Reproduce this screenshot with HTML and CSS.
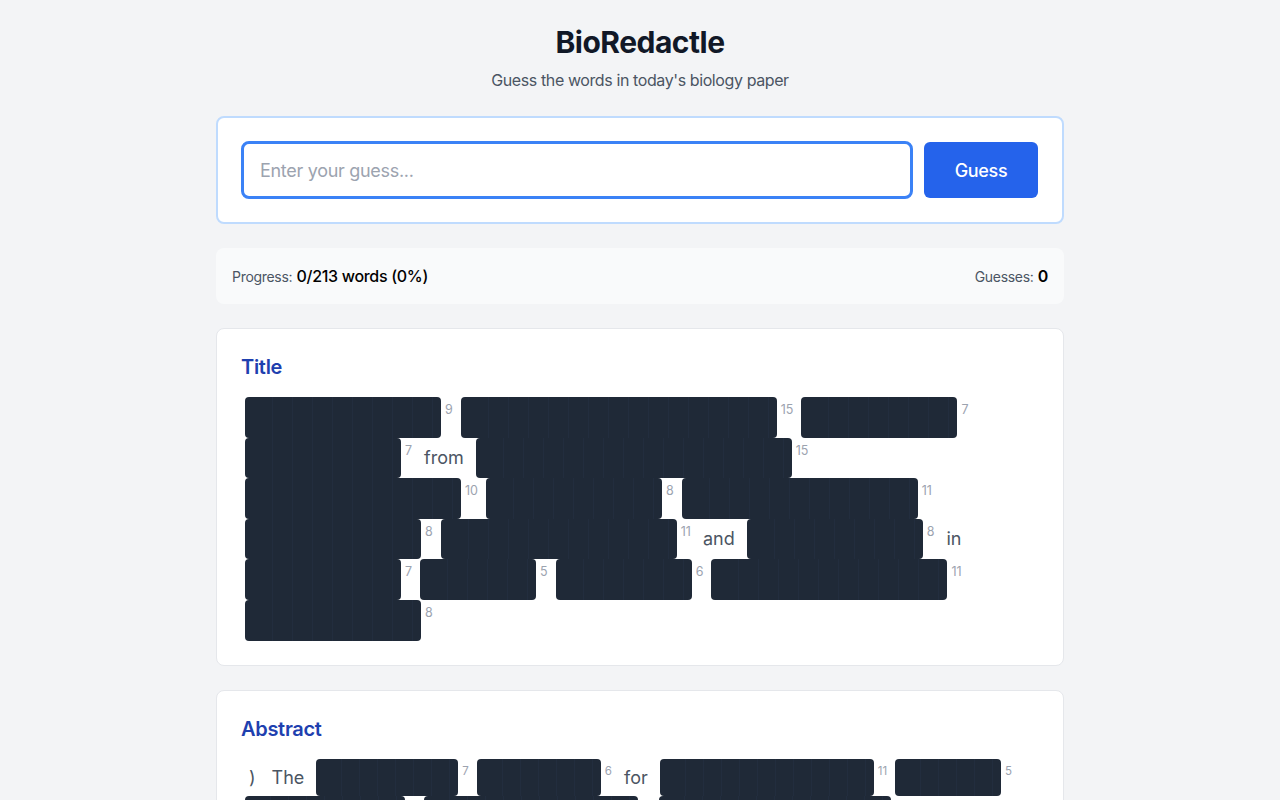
FILE: index.html
```html
<!DOCTYPE html>
<html lang="en">
<head>
<meta charset="utf-8">
<title>BioRedactle</title>
<link rel="stylesheet" href="styles.css">
</head>
<body>
<main class="page">
  <header class="head">
    <h1 class="brand">BioRedactle</h1>
    <p class="tagline">Guess the words in today's biology paper</p>
  </header>

  <section class="guess-card">
    <input class="guess-input" type="text" placeholder="Enter your guess...">
    <button class="guess-btn" type="button">Guess</button>
  </section>

  <section class="stats">
    <div class="stat"><span class="stat-label">Progress:</span> <span class="stat-value">0/213 words (0%)</span></div>
    <div class="stat"><span class="stat-label">Guesses:</span> <span class="stat-value strong">0</span></div>
  </section>

  <section class="card">
    <h2 class="card-title">Title</h2>
    <div class="words">
      <span class="tok"><span class="red" style="--n:9"></span><span class="num">9</span></span>
      <span class="tok"><span class="red" style="--n:15"></span><span class="num">15</span></span>
      <span class="tok"><span class="red" style="--n:7"></span><span class="num">7</span></span>
      <span class="tok"><span class="red" style="--n:7"></span><span class="num">7</span></span>
      <span class="plain">from</span>
      <span class="tok"><span class="red" style="--n:15"></span><span class="num">15</span></span>
      <span class="tok"><span class="red" style="--n:10"></span><span class="num">10</span></span>
      <span class="tok"><span class="red" style="--n:8"></span><span class="num">8</span></span>
      <span class="tok"><span class="red" style="--n:11"></span><span class="num">11</span></span>
      <span class="tok"><span class="red" style="--n:8"></span><span class="num">8</span></span>
      <span class="tok"><span class="red" style="--n:11"></span><span class="num">11</span></span>
      <span class="plain">and</span>
      <span class="tok"><span class="red" style="--n:8"></span><span class="num">8</span></span>
      <span class="plain">in</span>
      <span class="tok"><span class="red" style="--n:7"></span><span class="num">7</span></span>
      <span class="tok"><span class="red" style="--n:5"></span><span class="num">5</span></span>
      <span class="tok"><span class="red" style="--n:6"></span><span class="num">6</span></span>
      <span class="tok"><span class="red" style="--n:11"></span><span class="num">11</span></span>
      <span class="tok"><span class="red" style="--n:8"></span><span class="num">8</span></span>
    </div>
  </section>

  <section class="card">
    <h2 class="card-title">Abstract</h2>
    <div class="words small">
      <span class="plain">)</span>
      <span class="plain">The</span>
      <span class="tok"><span class="red" style="--n:7"></span><span class="num">7</span></span>
      <span class="tok"><span class="red" style="--n:6"></span><span class="num">6</span></span>
      <span class="plain">for</span>
      <span class="tok"><span class="red" style="--n:11"></span><span class="num">11</span></span>
      <span class="tok"><span class="red" style="--n:5"></span><span class="num">5</span></span>
      <span class="tok"><span class="red" style="--n:8"></span><span class="num">8</span></span>
      <span class="tok"><span class="red" style="--n:11"></span><span class="num">11</span></span>
      <span class="tok"><span class="red" style="--n:12"></span><span class="num">12</span></span>
      <span class="plain">of</span>
      <span class="tok"><span class="red" style="--n:9"></span><span class="num">9</span></span>
      <span class="tok"><span class="red" style="--n:4"></span><span class="num">4</span></span>
      <span class="plain">the</span>
      <span class="tok"><span class="red" style="--n:10"></span><span class="num">10</span></span>
      <span class="tok"><span class="red" style="--n:7"></span><span class="num">7</span></span>
      <span class="plain">and</span>
      <span class="tok"><span class="red" style="--n:8"></span><span class="num">8</span></span>
      <span class="tok"><span class="red" style="--n:6"></span><span class="num">6</span></span>
    </div>
  </section>
</main>
</body>
</html>
```

FILE: styles.css
```css
* { box-sizing: border-box; }

html, body {
  margin: 0;
  padding: 0;
}

body {
  background: #f3f4f6;
  font-family: Inter, "Noto Sans", "Liberation Sans", sans-serif;
  color: #111827;
}

.page {
  width: 848px;
  margin: 0 auto;
  padding: 24px 0 40px;
}

.head {
  text-align: center;
  margin-bottom: 24px;
}

.brand {
  margin: 0;
  font-size: 30px;
  line-height: 36px;
  font-weight: 700;
  letter-spacing: -0.5px;
  color: #111827;
}

.tagline {
  margin: 8px 0 0;
  font-size: 16px;
  line-height: 24px;
  letter-spacing: -0.4px;
  color: #4b5563;
}

.guess-card {
  display: flex;
  align-items: center;
  gap: 11px;
  background: #ffffff;
  border: 2px solid #bfdbfe;
  border-radius: 8px;
  padding: 23px 24px 23px 23px;
  margin-bottom: 24px;
}

.guess-input {
  flex: 1;
  height: 58px;
  border: 3px solid #3b82f6;
  border-radius: 8px;
  padding: 0 16px;
  font-family: inherit;
  font-size: 18px;
  letter-spacing: -0.3px;
  color: #111827;
  outline: none;
  background: #fff;
}

.guess-input::placeholder {
  color: #9ca3af;
}

.guess-btn {
  width: 114px;
  height: 56px;
  border: 0;
  border-radius: 6px;
  background: #2563eb;
  color: #ffffff;
  font-family: inherit;
  font-size: 18px;
  font-weight: 500;
  letter-spacing: -0.3px;
}

.stats {
  display: flex;
  justify-content: space-between;
  align-items: center;
  background: #f9fafb;
  border-radius: 8px;
  padding: 16px;
  height: 56px;
  margin-bottom: 24px;
  letter-spacing: -0.3px;
}

.stat {
  line-height: 24px;
}

.stat-label {
  font-size: 14px;
  color: #4b5563;
}

.stat-value {
  font-size: 16px;
  font-weight: 500;
  color: #000000;
}

.stat-value.strong {
  font-weight: 600;
}

.card {
  background: #ffffff;
  border: 1px solid #e5e7eb;
  border-radius: 8px;
  padding: 24px;
  margin-bottom: 24px;
}

.card-title {
  margin: 0 0 16px;
  font-size: 20px;
  line-height: 28px;
  font-weight: 600;
  letter-spacing: -0.3px;
  color: #1e40af;
}

.words {
  display: flex;
  flex-wrap: wrap;
  align-items: flex-start;
  --cell: 20px;
  --h: 40.6px;
  --num: 12.5px;
}

.words.small {
  --cell: 18px;
  --h: 37.3px;
  --num: 11.5px;
}

.tok {
  display: inline-flex;
  align-items: flex-start;
  margin: 0 4px;
}

.red {
  display: block;
  width: calc(var(--n) * var(--cell) + 16px);
  height: var(--h);
  padding: 0 8px;
  border-radius: 4px;
  background:
    repeating-linear-gradient(90deg, transparent 0, transparent calc(var(--cell) - 1px), #222d3e calc(var(--cell) - 1px), #222d3e var(--cell)) content-box,
    #1f2937;
}

.num {
  margin-left: 4px;
  margin-top: 7px;
  font-size: var(--num);
  line-height: 1;
  color: #9ca3af;
}

.plain {
  margin: 0 4px;
  padding: 0 4px;
  font-size: 18px;
  line-height: var(--h);
  color: #4b5563;
}
```
